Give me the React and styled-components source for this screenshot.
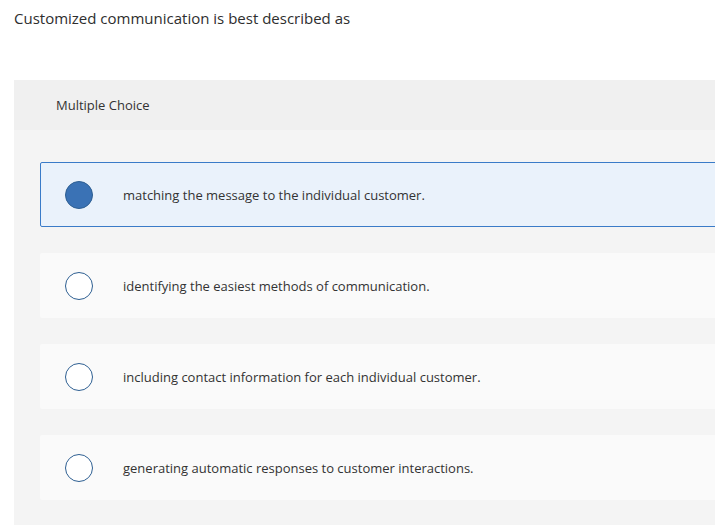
import React from "react";
import styled, { createGlobalStyle } from "styled-components";

const GlobalStyle = createGlobalStyle`
  html, body {
    margin: 0;
    padding: 0;
    background: #ffffff;
    overflow: hidden;
  }
  body {
    font-family: "Open Sans", "Lato", sans-serif;
    color: #333333;
  }
`;

const Page = styled.div`
  width: 715px;
  height: 525px;
  overflow: hidden;
`;

const Question = styled.p`
  margin: 0;
  padding: 8px 0 0 14px;
  font-size: 15px;
  line-height: 20px;
  color: #2e2e2e;
  height: 72px;
`;

const Panel = styled.section`
  margin-left: 14px;
  width: 760px;
  background: #f4f4f4;
  min-height: 445px;
`;

const PanelHeader = styled.div`
  height: 50px;
  background: #f0f0f0;
  display: flex;
  align-items: center;
  padding-left: 42px;
  font-size: 13px;
  color: #333333;
`;

const Options = styled.div`
  display: flex;
  flex-direction: column;
  gap: 26px;
  padding: 32px 0 0 26px;
`;

const Option = styled.label`
  box-sizing: border-box;
  height: 65px;
  display: flex;
  align-items: center;
  border-radius: 2px;
  background: ${(p) => (p.$selected ? "#eaf2fb" : "#fafafa")};
  border: 1px solid ${(p) => (p.$selected ? "#3a7bc8" : "transparent")};
  cursor: pointer;
`;

const Radio = styled.span`
  box-sizing: border-box;
  width: 28px;
  height: 28px;
  border-radius: 50%;
  margin-left: 24px;
  flex-shrink: 0;
  border: 1.5px solid #2e5f92;
  background: ${(p) => (p.$checked ? "#3a72b5" : "#ffffff")};
`;

const OptionText = styled.span`
  margin-left: 30px;
  font-size: 13px;
  color: #333333;
`;

const choices = [
  "matching the message to the individual customer.",
  "identifying the easiest methods of communication.",
  "including contact information for each individual customer.",
  "generating automatic responses to customer interactions.",
];

const App = () => {
  const selected = 0;
  return (
    <Page>
      <GlobalStyle />
      <Question>Customized communication is best described as</Question>
      <Panel>
        <PanelHeader>Multiple Choice</PanelHeader>
        <Options>
          {choices.map((c, i) => (
            <Option key={c} $selected={i === selected}>
              <Radio $checked={i === selected} />
              <OptionText>{c}</OptionText>
            </Option>
          ))}
        </Options>
      </Panel>
    </Page>
  );
};

export default App;
